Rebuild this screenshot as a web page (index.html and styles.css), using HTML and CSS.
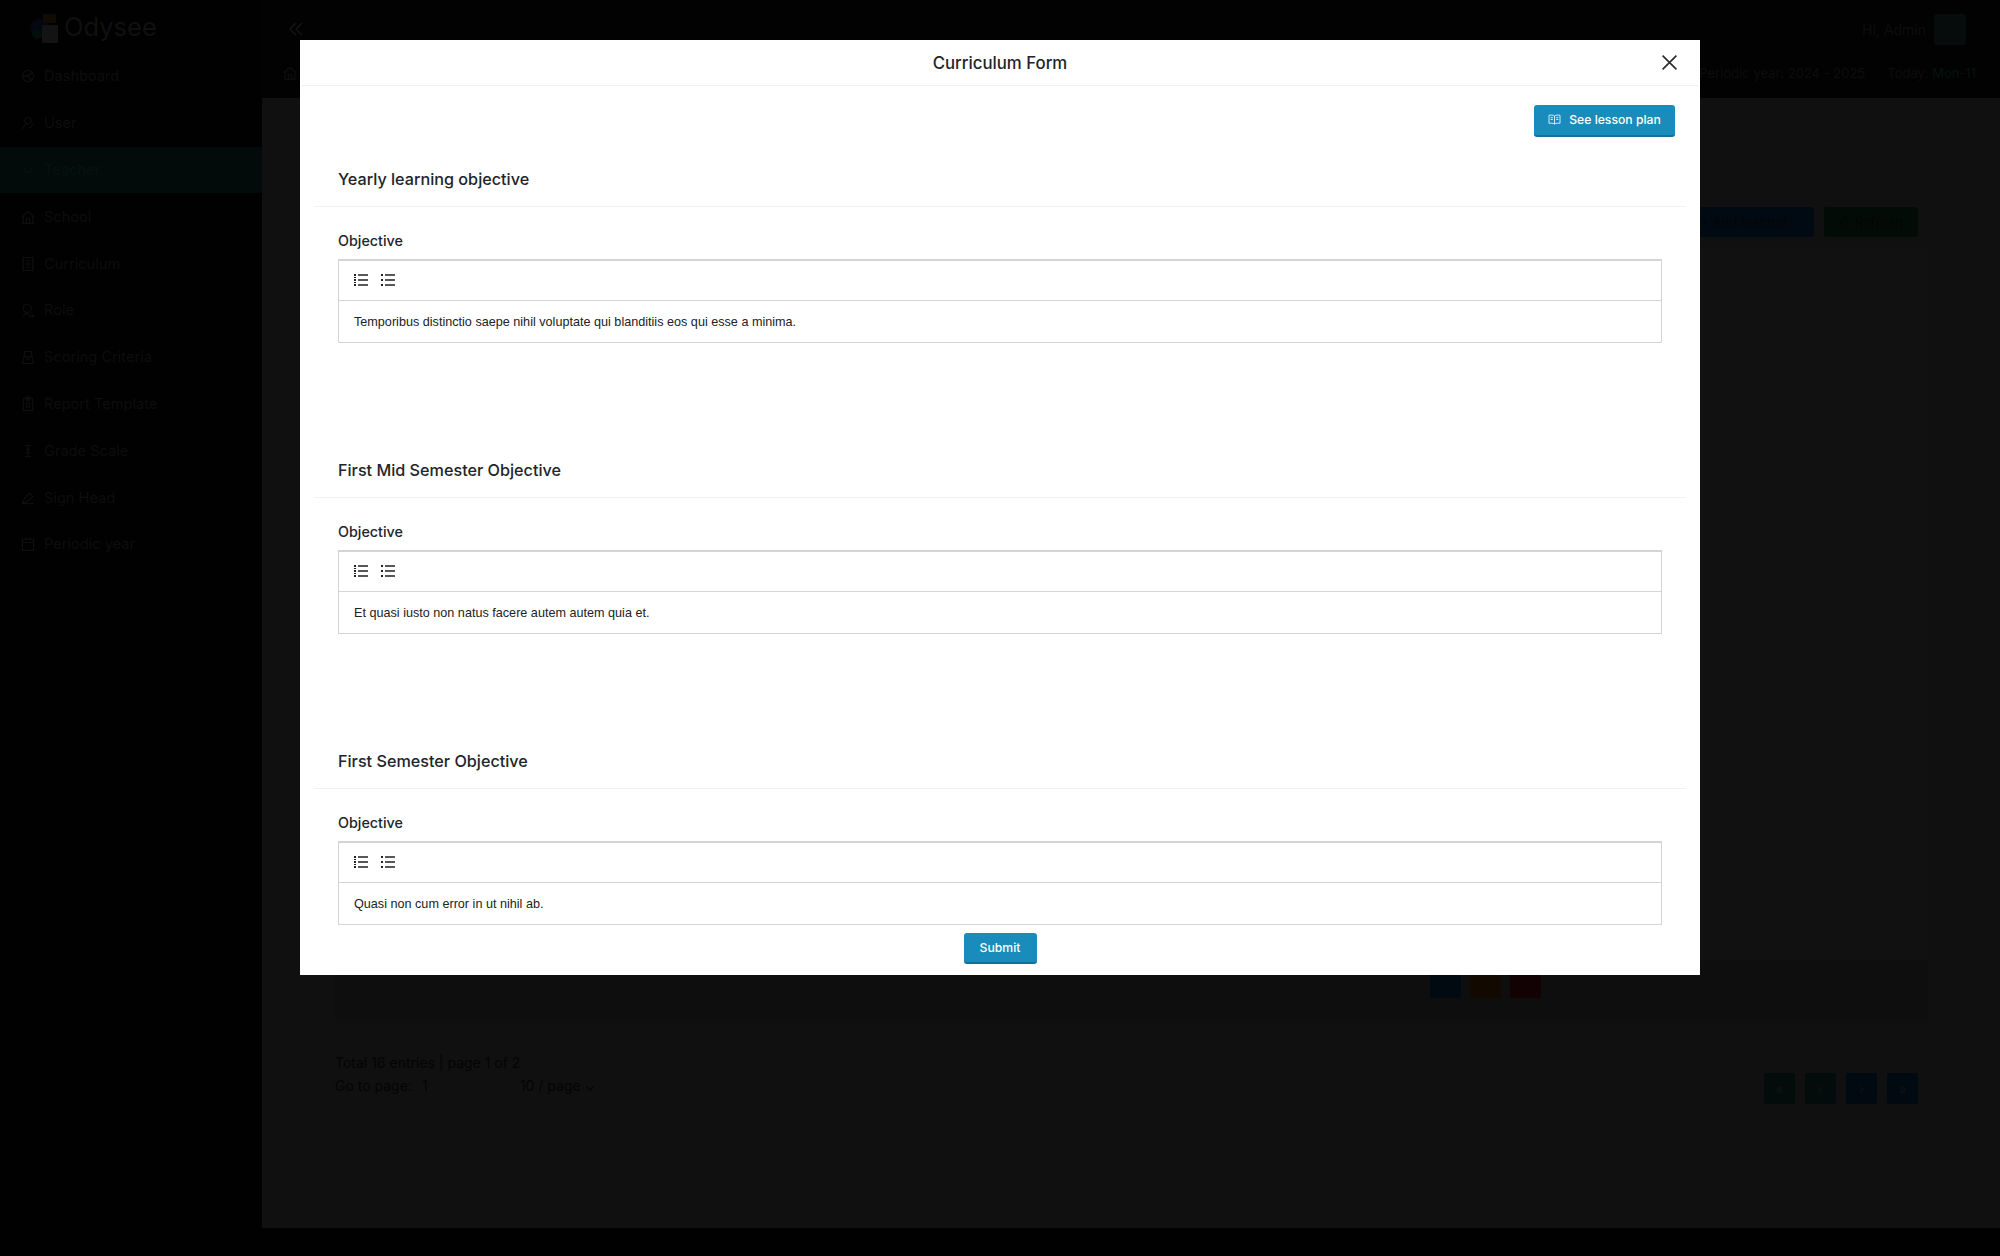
FILE: index.html
```html
<!DOCTYPE html>
<html lang="en">
<head>
<meta charset="utf-8">
<title>Curriculum Form</title>
<link rel="stylesheet" href="styles.css">
</head>
<body>
<div class="app">
  <aside class="sidebar">
    <div class="logo">
      <svg class="logo-mark" viewBox="0 0 34 34"><circle cx="12" cy="18" r="10" fill="#040710"/><rect x="15" y="4" width="13" height="9" fill="#100c03"/><rect x="14" y="15" width="16" height="18" fill="#131313"/><circle cx="9" cy="24" r="5" fill="#030e0b"/></svg>
      <span class="logo-text">Odysee</span>
    </div>
    <nav class="nav">
      <a class="nav-item"><svg class="nav-icon" viewBox="0 0 20 20"><circle cx="10" cy="10" r="7"/><path d="M3 10h7l5-4M10 10l4 5"/></svg>Dashboard</a>
      <a class="nav-item"><svg class="nav-icon" viewBox="0 0 20 20"><circle cx="10" cy="7" r="4"/><path d="M3 18c1-5 4-7 7-7M11 17l6-6"/></svg>User</a>
      <a class="nav-item active"><svg class="nav-icon" viewBox="0 0 20 20"><path d="M4 6l6 8 6-8M4 14l4-4M16 14l-4-4"/></svg>Teacher</a>
      <a class="nav-item"><svg class="nav-icon" viewBox="0 0 20 20"><path d="M2 10l8-7 8 7M4 9v9h12V9M8 18v-6h4v6"/></svg>School</a>
      <a class="nav-item"><svg class="nav-icon" viewBox="0 0 20 20"><path d="M4 2h12v16H4zM7 6h6M7 10h6M7 14h6"/></svg>Curriculum</a>
      <a class="nav-item"><svg class="nav-icon" viewBox="0 0 20 20"><circle cx="9" cy="8" r="5"/><path d="M4 18l4-5 4 5h5l-3-4"/></svg>Role</a>
      <a class="nav-item"><svg class="nav-icon" viewBox="0 0 20 20"><path d="M6 3h8l1 7H5zM3 18l2-8h10l2 8zM8 13h4"/></svg>Scoring Criteria</a>
      <a class="nav-item"><svg class="nav-icon" viewBox="0 0 20 20"><path d="M4 3h12v15H4zM8 1h4v4H8zM8 9h4v5H8z"/></svg>Report Template</a>
      <a class="nav-item"><svg class="nav-icon" viewBox="0 0 20 20"><path d="M6 3h8M6 17h8M10 3v14M7 8h6M7 12h6"/></svg>Grade Scale</a>
      <a class="nav-item"><svg class="nav-icon" viewBox="0 0 20 20"><path d="M3 17l3-7 6-6 4 4-6 6zM3 17h14"/></svg>Sign Head</a>
      <a class="nav-item"><svg class="nav-icon" viewBox="0 0 20 20"><path d="M3 4h14v14H3zM3 8h14M7 2v3M13 2v3"/></svg>Periodic year</a>
    </nav>
  </aside>

  <div class="main-col">
    <header class="topbar">
      <div class="topbar-row">
        <svg class="collapse" viewBox="0 0 18 18"><path d="M9 3L3 9l6 6M15 3L9 9l6 6"/></svg>
        <div class="user">
          <span class="user-name">Hi, Admin</span>
          <span class="avatar"></span>
        </div>
      </div>
      <div class="crumb-row">
        <svg class="crumb-home" viewBox="0 0 20 20"><path d="M2 10l8-7 8 7M4 9v9h12V9M8 18v-6h4v6"/></svg>
        <div class="period">
          <span class="period-tab">Periodic year: 2024 - 2025</span>
          <span class="period-tab">Today: <span class="period-day">Mon-11</span></span>
        </div>
      </div>
    </header>

    <main class="content">
      <div class="actions">
        <span class="act-btn act-add">+ Add teacher</span>
        <span class="act-btn act-refresh">&#8635; Refresh</span>
      </div>
      <section class="card">
        <div class="card-spacer"></div>
        <div class="card-row">
          <span class="row-btn row-blue"></span>
          <span class="row-btn row-orange"></span>
          <span class="row-btn row-red"></span>
        </div>
      </section>
      <div class="pager">
        <div class="pager-info">
          <div>Total 16 entries | page 1 of 2</div>
          <div class="pager-go">Go to page: <span class="go-input">1</span><span class="go-size">10 / page &#8964;</span></div>
        </div>
        <div class="pager-btns">
          <span class="pg-btn pg-off">&#171;</span>
          <span class="pg-btn pg-off">&#8249;</span>
          <span class="pg-btn pg-on">&#8250;</span>
          <span class="pg-btn pg-on">&#187;</span>
        </div>
      </div>
    </main>
    <div class="page-foot"></div>
  </div>
</div>

<div class="modal" role="dialog">
  <div class="modal-head">
    <h2 class="modal-title">Curriculum Form</h2>
    <svg class="modal-close" viewBox="0 0 16 16"><path d="M1.5 1.5l13 13M14.5 1.5l-13 13"/></svg>
  </div>
  <div class="modal-body">
    <div class="plan-row">
      <button class="btn btn-plan">
        <svg class="book" viewBox="0 0 14 12"><path d="M7 2.2C5.5 1 3 1 1 1.4v8.8c2-.4 4.500-.4 6 .8 1.500-1.200 4-1.200 6-.8V1.400C11 1 8.500 1 7 2.200zM7 2.200V11M2.800 4h2.400M2.800 6h2.400M8.800 4h2.400M8.800 6h2.400"/></svg>
        See lesson plan
      </button>
    </div>

    <section class="obj">
      <h3 class="obj-title">Yearly learning objective</h3>
      <label class="obj-label">Objective</label>
      <div class="editor">
        <div class="toolbar">
          <svg class="tool" viewBox="0 0 14 14"><path class="tool-dots" d="M0 1h2v2H0zM0 4h2v1H0zM0 6h2v2H0zM0 9h2v1H0zM0 11h2v2H0z"/><path class="tool-lines" d="M4 2h10M4 7h10M4 12h10"/></svg>
          <svg class="tool" viewBox="0 0 14 14"><path class="tool-dots" d="M0 1h2v2H0zM0 6h2v2H0zM0 11h2v2H0z"/><path class="tool-lines" d="M4 2h10M4 7h10M4 12h10"/></svg>
        </div>
        <div class="editor-text">Temporibus distinctio saepe nihil voluptate qui blanditiis eos qui esse a minima.</div>
      </div>
    </section>

    <section class="obj">
      <h3 class="obj-title">First Mid Semester Objective</h3>
      <label class="obj-label">Objective</label>
      <div class="editor">
        <div class="toolbar">
          <svg class="tool" viewBox="0 0 14 14"><path class="tool-dots" d="M0 1h2v2H0zM0 4h2v1H0zM0 6h2v2H0zM0 9h2v1H0zM0 11h2v2H0z"/><path class="tool-lines" d="M4 2h10M4 7h10M4 12h10"/></svg>
          <svg class="tool" viewBox="0 0 14 14"><path class="tool-dots" d="M0 1h2v2H0zM0 6h2v2H0zM0 11h2v2H0z"/><path class="tool-lines" d="M4 2h10M4 7h10M4 12h10"/></svg>
        </div>
        <div class="editor-text">Et quasi iusto non natus facere autem autem quia et.</div>
      </div>
    </section>

    <section class="obj">
      <h3 class="obj-title">First Semester Objective</h3>
      <label class="obj-label">Objective</label>
      <div class="editor">
        <div class="toolbar">
          <svg class="tool" viewBox="0 0 14 14"><path class="tool-dots" d="M0 1h2v2H0zM0 4h2v1H0zM0 6h2v2H0zM0 9h2v1H0zM0 11h2v2H0z"/><path class="tool-lines" d="M4 2h10M4 7h10M4 12h10"/></svg>
          <svg class="tool" viewBox="0 0 14 14"><path class="tool-dots" d="M0 1h2v2H0zM0 6h2v2H0zM0 11h2v2H0z"/><path class="tool-lines" d="M4 2h10M4 7h10M4 12h10"/></svg>
        </div>
        <div class="editor-text">Quasi non cum error in ut nihil ab.</div>
      </div>
    </section>
  </div>
  <div class="modal-foot">
    <button class="btn btn-submit">Submit</button>
  </div>
</div>
</body>
</html>
```
FILE: styles.css
```css
* { box-sizing: border-box; }
html, body { margin: 0; height: 1256px; overflow: hidden; }
body { background: #010101; font-family: "Inter", "Noto Sans", sans-serif; color: #121212; position: relative; }
.app { display: flex; height: 1256px; }

/* darkened page behind the dialog */
.sidebar { width: 262px; flex: none; background: #010101; }
.logo { height: 53px; display: flex; align-items: center; padding-left: 28px; gap: 2px; }
.logo-mark { width: 34px; height: 34px; }
.logo-text { font-size: 25.500px; color: #101010; line-height: 1; }
.nav { display: flex; flex-direction: column; }
.nav-item { height: 46.8px; display: flex; align-items: center; gap: 8px; padding-left: 20px; font-size: 14.600px; color: #0d0d0d; white-space: nowrap; }
.nav-item.active { background: #020b0a; color: #051210; }
.nav-icon { width: 16px; height: 16px; fill: none; stroke: #0e0e0e; stroke-width: 1.6; flex: none; }
.active .nav-icon { stroke: #051210; }

.main-col { flex: 1; min-width: 0; display: flex; flex-direction: column; }
.topbar { height: 98px; flex: none; background: #020202; }
.topbar-row { height: 53px; display: flex; align-items: center; justify-content: space-between; padding: 5px 34px 0 25px; }
.collapse { width: 18px; height: 18px; fill: none; stroke: #131313; stroke-width: 1.6; }
.user { display: flex; align-items: center; gap: 8px; }
.user-name { font-size: 14px; color: #0d0d0d; }
.avatar { width: 32px; height: 31px; border-radius: 3px; background: #050c0b; }
.crumb-row { height: 45px; display: flex; align-items: center; justify-content: space-between; padding: 0 16px 6px 20px; }
.crumb-home { width: 16px; height: 16px; fill: none; stroke: #0e0e0e; stroke-width: 1.6; }
.period { display: flex; gap: 6px; font-size: 13px; color: #0d0d0d; }
.period-tab { padding: 6px 8px; }
.period-day { color: #051210; }

.content { flex: 1; background: #101010; padding: 109px 72px 0 73px; display: flex; flex-direction: column; }
.actions { display: flex; justify-content: flex-end; gap: 10px; padding-right: 10px; height: 30px; }
.act-btn { display: flex; align-items: center; justify-content: center; border-radius: 3px; font-size: 13px; color: #050505; }
.act-add { width: 140px; background: #010a12; }
.act-refresh { width: 94px; background: #020b06; }
.card { margin-top: 11px; height: 772px; background: #111; display: flex; flex-direction: column; }
.card-spacer { flex: 1; }
.card-row { height: 60px; background: #0e0e0e; display: flex; gap: 9px; padding: 0 0 22px 1095px; }
.row-btn { width: 31px; height: 38px; border-radius: 2px; }
.row-blue { background: #010911; }
.row-orange { background: #120a01; }
.row-red { background: #120204; }

.pager { display: flex; justify-content: space-between; padding: 31px 10px 0 0; font-size: 14px; color: #040404; }
.pager-info { line-height: 23px; }
.pager-go { display: flex; }
.go-input { width: 108px; padding-left: 10px; }
.go-size { padding-left: 0; }
.pager-btns { display: flex; gap: 10px; padding-top: 22px; }
.pg-btn { width: 31px; height: 31px; border-radius: 2px; display: flex; align-items: center; justify-content: center; color: #121212; }
.pg-off { background: #030c0b; }
.pg-on { background: #010911; }
.page-foot { height: 28px; flex: none; background: #010101; }

/* dialog */
.modal { position: absolute; left: 300px; top: 40px; width: 1400px; height: 935px; background: #fff; display: flex; flex-direction: column; color: #212529; }
.modal-head { height: 46px; flex: none; display: flex; align-items: center; justify-content: center; position: relative; border-bottom: 1px solid #f1f1f1; margin: 0 2px; }
.modal-title { margin: 0; font-size: 16.800px; font-weight: 500; }
.modal-close { position: absolute; right: 20px; top: 14px; width: 17px; height: 17px; fill: none; stroke: #2a2a2a; stroke-width: 1.5; }
.modal-body { flex: 1; min-height: 0; overflow: hidden; padding: 0 14px; }
.plan-row { display: flex; justify-content: flex-end; padding: 19px 11px 14px 0; }
.btn { border: 0; border-bottom: 2px solid #13709a; border-radius: 3px; background: #1a8cbc; color: #fff; font-family: inherit; font-weight: 500; font-size: 12.200px; display: flex; align-items: center; justify-content: center; padding-bottom: 2px; }
.btn-plan { width: 141px; height: 32px; gap: 8px; }
.book { width: 13px; height: 11px; fill: none; stroke: #fff; stroke-width: .9; }
.obj { height: 291px; }
.obj-title { margin: 0; height: 56px; display: flex; align-items: center; padding-left: 24px; font-size: 16.200px; font-weight: 500; border-bottom: 1px solid #f1f1f1; }
.obj-label { display: block; margin-left: 24px; padding-top: 24px; height: 52px; font-size: 14.300px; font-weight: 500; line-height: 19px; }
.editor { margin: 0 24px; height: 84px; border: 1px solid #d4d4d4; border-top-width: 2px; }
.toolbar { height: 40px; display: flex; align-items: center; gap: 13px; padding: 0 15px 1px; border-bottom: 1px solid #d4d4d4; }
.tool { width: 14px; height: 14px; }
.tool-dots { fill: #222; }
.tool-lines { fill: none; stroke: #222; stroke-width: 1.300; }
.editor-text { padding: 0 15px; height: 41px; display: flex; align-items: center; font-family: "Liberation Sans", Arial, sans-serif; font-size: 12.640px; color: #222; }
.modal-foot { height: 50px; flex: none; display: flex; justify-content: center; padding-top: 8px; }
.btn-submit { width: 73px; height: 31px; }
```
